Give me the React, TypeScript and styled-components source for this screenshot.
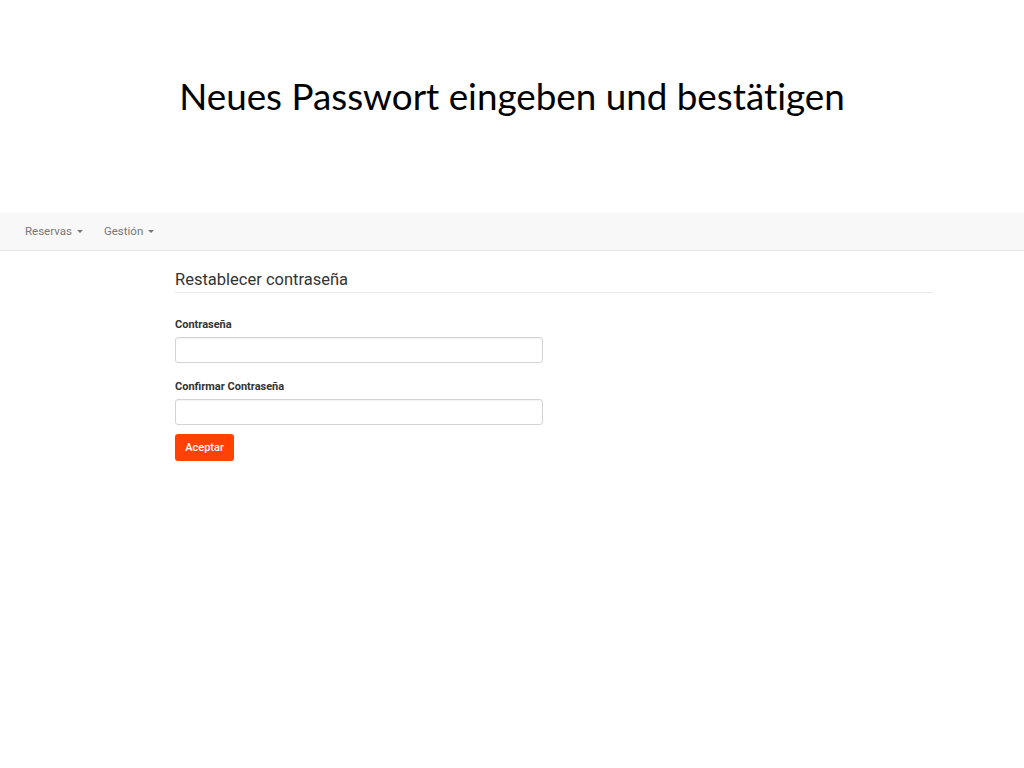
import React from "react";
import styled, { createGlobalStyle } from "styled-components";

const Global = createGlobalStyle`
  html, body { margin: 0; padding: 0; background: #ffffff; }
  body { font-family: Roboto, "Liberation Sans", Arial, sans-serif; }
  * { box-sizing: border-box; }
`;

const Page = styled.div`
  width: 1024px;
  height: 768px;
  display: flex;
  flex-direction: column;
  background: #ffffff;
`;

const SlideTitle = styled.h1`
  margin: 0;
  padding-top: 73px;
  height: 213px;
  text-align: center;
  font-family: Lato, "Open Sans", sans-serif;
  font-variant-ligatures: none;
  font-weight: 400;
  font-size: 36.8px;
  line-height: 46px;
  color: #000;
`;

const Navbar = styled.nav`
  height: 38px;
  background: #f8f8f8;
  border-bottom: 1px solid #e7e7e7;
  display: flex;
  align-items: center;
  padding-left: 25px;
  padding-bottom: 2px;
  gap: 21px;
`;

const NavItem = styled.span`
  font-size: 11.5px;
  color: #777;
  display: flex;
  align-items: center;
  gap: 5px;
`;

const Caret = styled.span`
  width: 0;
  height: 0;
  border-left: 3px solid transparent;
  border-right: 3px solid transparent;
  border-top: 3px solid #777;
  margin-top: 1px;
`;

const Content = styled.div`
  padding: 19px 0 0 175px;
  width: 933px;
`;

const Heading = styled.h2`
  margin: 0;
  font-size: 16.5px;
  font-weight: 400;
  color: #333;
  line-height: 20px;
  padding-bottom: 2px;
  border-bottom: 1px solid #e8e8e8;
`;

const Form = styled.form`
  padding-top: 25px;
  width: 368px;
`;

const Group = styled.div`
  margin-bottom: 17px;
`;

const Label = styled.label`
  display: block;
  font-size: 11px;
  font-weight: 700;
  color: #333;
  margin-bottom: 6px;
  line-height: 13px;
`;

const Input = styled.input`
  display: block;
  width: 368px;
  height: 26px;
  border: 1px solid #d4d4d4;
  border-radius: 3px;
  background: #fff;
  box-shadow: inset 0 1px 1px rgba(0, 0, 0, 0.05);
`;

const Button = styled.button`
  display: block;
  margin-top: -8px;
  width: 59px;
  height: 27px;
  border: none;
  border-radius: 3px;
  background: #ff4106;
  color: #fff;
  font-family: Roboto, "Liberation Sans", Arial, sans-serif;
  font-size: 11px;
  font-weight: 500;
  padding: 0;
`;

export default function App() {
  return (
    <Page>
      <Global />
      <SlideTitle>Neues Passwort eingeben und bestätigen</SlideTitle>
      <Navbar>
        <NavItem>Reservas <Caret /></NavItem>
        <NavItem>Gestión <Caret /></NavItem>
      </Navbar>
      <Content>
        <Heading>Restablecer contraseña</Heading>
        <Form>
          <Group>
            <Label>Contraseña</Label>
            <Input type="password" />
          </Group>
          <Group>
            <Label>Confirmar Contraseña</Label>
            <Input type="password" />
          </Group>
          <Button type="button">Aceptar</Button>
        </Form>
      </Content>
    </Page>
  );
}
